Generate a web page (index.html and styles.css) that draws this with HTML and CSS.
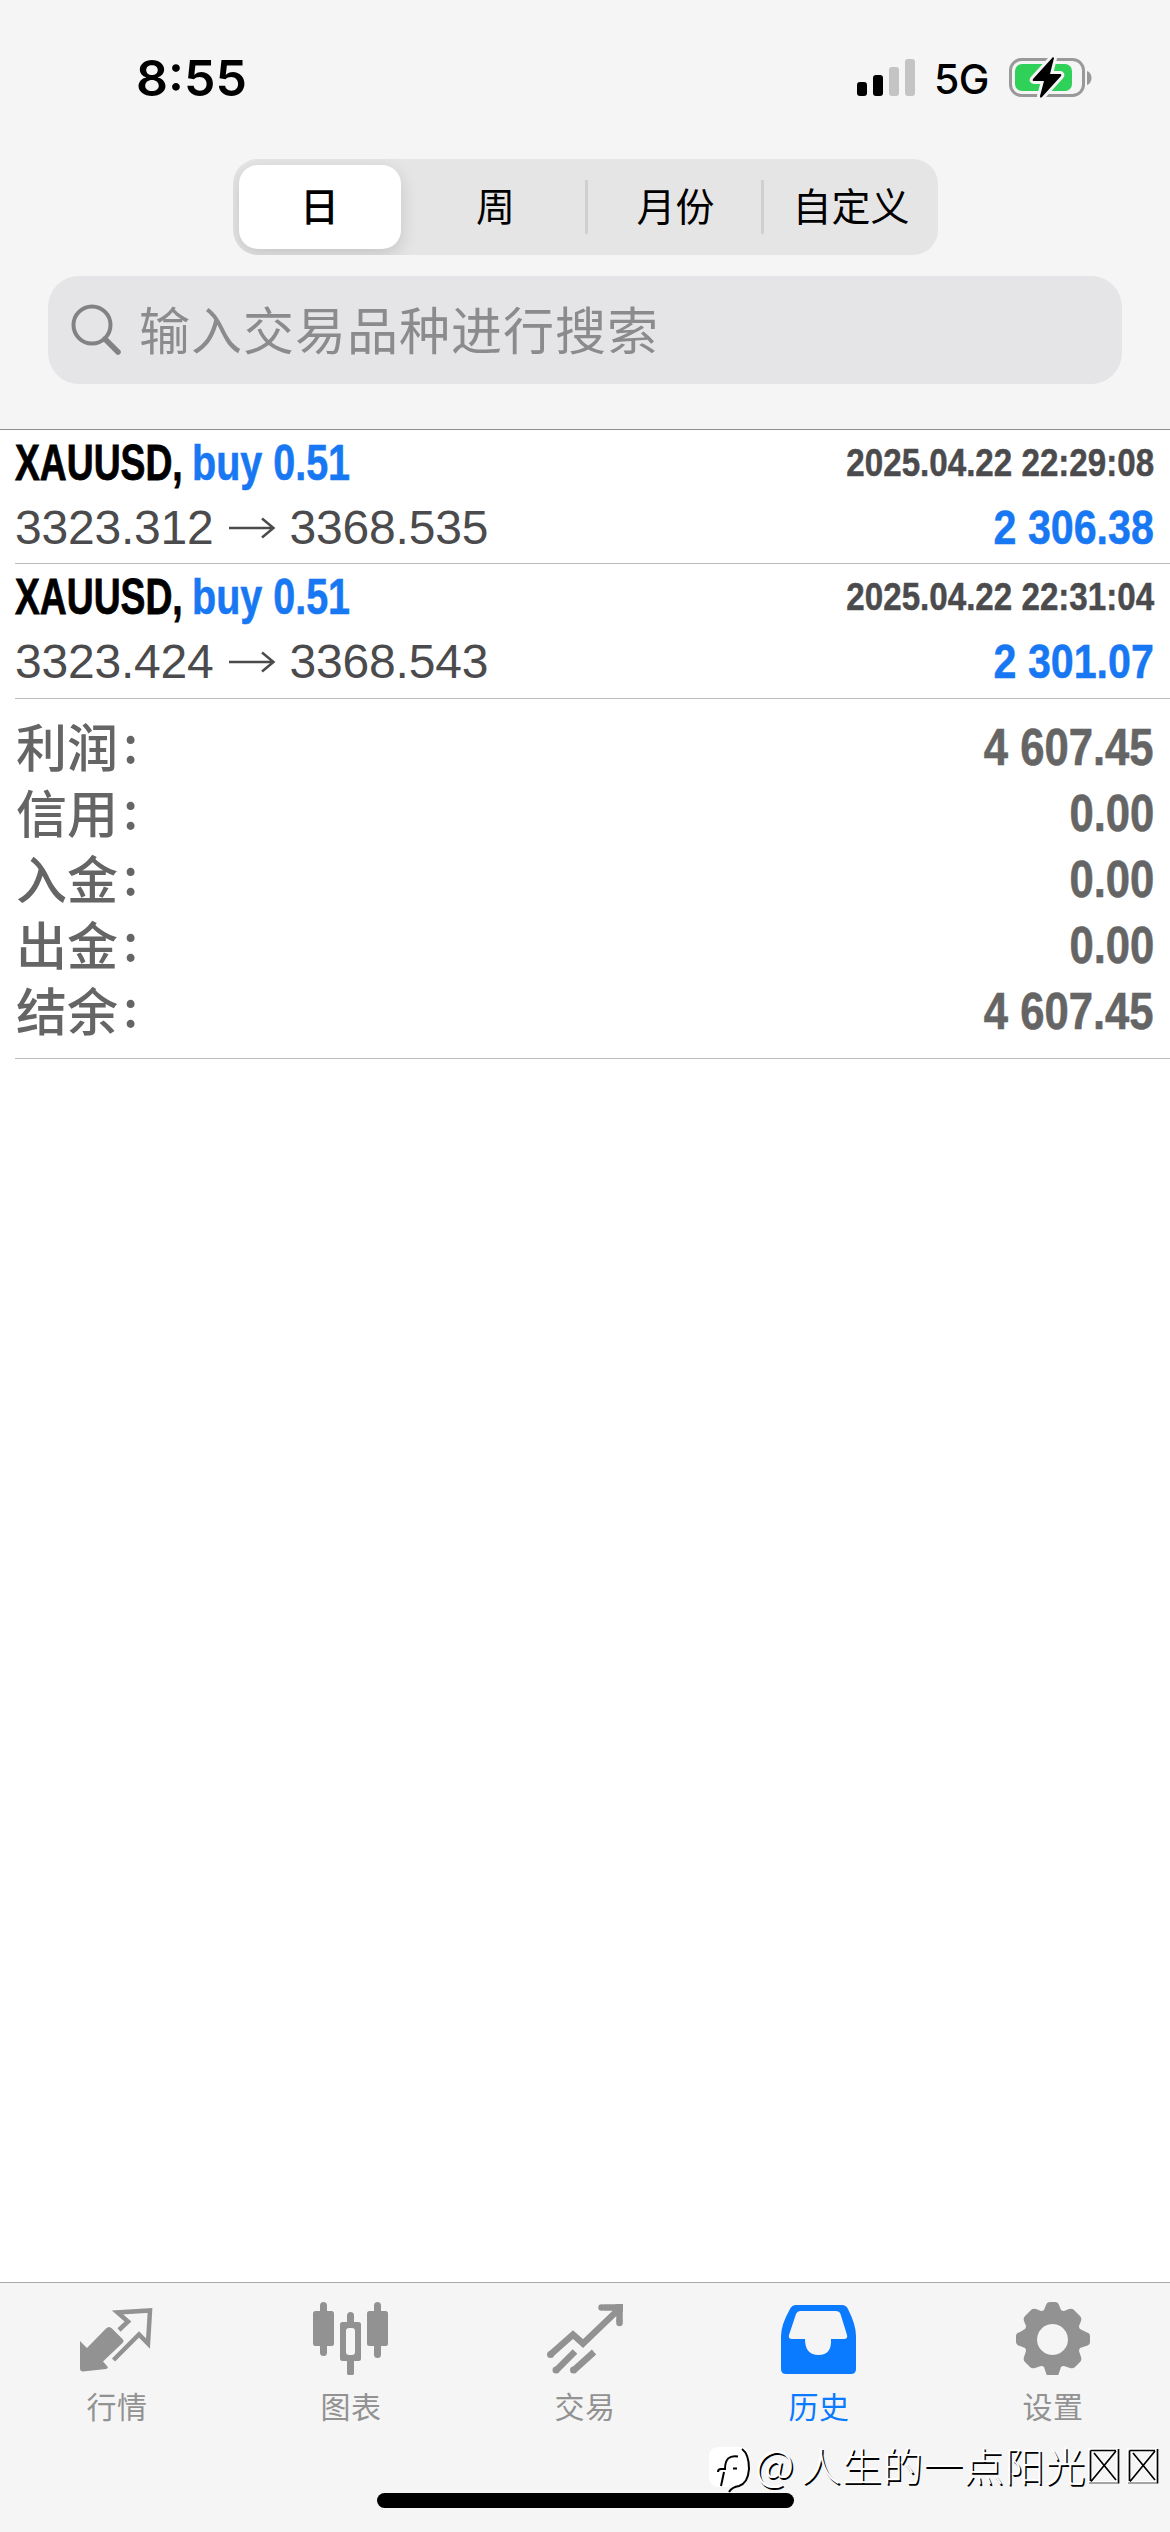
FILE: index.html
```html
<!DOCTYPE html>
<html lang="zh-CN">
<head>
<meta charset="utf-8">
<title>历史</title>
<link rel="stylesheet" href="styles.css">
</head>
<body>
<div class="app">
  <header class="top">
    <div class="status">
      <span class="clock">8:55</span>
      <div class="status-right">
        <svg class="signal" width="59" height="42" viewBox="0 0 59 42"><rect x="0" y="23" width="10" height="14" rx="3"/><rect x="16" y="16" width="10" height="21" rx="3"/><rect x="32" y="8" width="10" height="29" rx="3" fill="#c4c4c4"/><rect x="48" y="0" width="10" height="37" rx="3" fill="#c4c4c4"/></svg>
        <span class="net">5G</span>
        <svg class="battery" width="84" height="42" viewBox="0 0 84 42"><rect x="1.5" y="2.5" width="73" height="36" rx="11" fill="none" stroke="#999" stroke-width="3"/><rect x="6" y="7" width="57" height="27" rx="7" fill="#30d158"/><path d="M78 14c6 2 6 12 0 14z" fill="#999"/><path d="M44 0 24 22q-1 2 1 2h10l-4 15q0 3 2 1L52 19q1-2-1-2H41l4-16z" stroke="#f5f5f5" stroke-width="6" stroke-linejoin="round"/><path d="M44 0 24 22q-1 2 1 2h10l-4 15q0 3 2 1L52 19q1-2-1-2H41l4-16z"/></svg>
      </div>
    </div>
    <nav class="segments">
      <span class="seg on">日</span>
      <span class="seg week">周</span>
      <span class="seg line">月份</span>
      <span class="seg line custom">自定义</span>
    </nav>
    <div class="search">
      <svg class="lens" width="52" height="52" viewBox="0 0 52 52"><circle cx="21" cy="21" r="18.500" stroke-width="4"/><path d="M34 35 47 48" stroke-width="5.500"/></svg>
      <span>输入交易品种进行搜索</span>
    </div>
  </header>
  <main class="content">
    <section class="deal">
      <div class="deal-line head"><b class="cond sym">XAUUSD,</b><b class="cond side">buy 0.51</b><b class="cond date">2025.04.22 22:29:08</b></div>
      <div class="deal-line"><span class="price">3323.312</span><svg class="arrow" width="48" height="22" viewBox="0 0 48 22"><path d="M1 11H45M34 1.500 45.500 11 34 20.500"/></svg><span class="price">3368.535</span><b class="cond profit">2 306.38</b></div>
    </section>
    <section class="deal">
      <div class="deal-line head"><b class="cond sym">XAUUSD,</b><b class="cond side">buy 0.51</b><b class="cond date">2025.04.22 22:31:04</b></div>
      <div class="deal-line"><span class="price">3323.424</span><svg class="arrow" width="48" height="22" viewBox="0 0 48 22"><path d="M1 11H45M34 1.500 45.500 11 34 20.500"/></svg><span class="price">3368.543</span><b class="cond profit">2 301.07</b></div>
    </section>
    <section class="totals">
      <div class="total"><span class="label">利润</span><span class="colon">:</span><b class="cond sum">4 607.45</b></div>
      <div class="total"><span class="label">信用</span><span class="colon">:</span><b class="cond sum">0.00</b></div>
      <div class="total"><span class="label">入金</span><span class="colon">:</span><b class="cond sum">0.00</b></div>
      <div class="total"><span class="label">出金</span><span class="colon">:</span><b class="cond sum">0.00</b></div>
      <div class="total"><span class="label">结余</span><span class="colon">:</span><b class="cond sum">4 607.45</b></div>
    </section>
  </main>
  <footer class="tabs">
    <div class="tab">
      <svg width="80" height="80" viewBox="0 0 80 80"><path d="M3 46 10 53 29 33.500q3-3 6 0L45.500 44q2 2 0 4L26 66.500 30 71q2 2-1 3L6 76.500q-3 0-3-3V47z"/><path d="M42 35 51 26.500 40.500 17.500 73 15.500 71 48.500 62 39.500 36.500 65" fill="none" stroke="currentColor" stroke-width="4.500"/></svg>
      <span>行情</span>
    </div>
    <div class="tab">
      <svg width="80" height="80" viewBox="0 0 80 80"><rect x="9" y="7" width="7" height="54" rx="3.500"/><rect x="2" y="16" width="21" height="35" rx="2.500"/><rect x="63" y="7" width="7" height="56" rx="3.500"/><rect x="56" y="16" width="21" height="35" rx="2.500"/><rect x="36" y="17" width="7" height="64" rx="3.500"/><rect x="29" y="27" width="21" height="39" rx="2.500"/><rect x="35" y="33" width="9" height="27" rx="3" fill="#f5f5f5"/></svg>
      <span>图表</span>
    </div>
    <div class="tab">
      <svg width="80" height="80" viewBox="0 0 80 80"><path d="M5 60 28 39.500 38 48.500 73 15M59 12.500H74.500V27M10.500 76 30 56.500M28 76 49 57" fill="none" stroke="currentColor" stroke-width="6.500"/><path d="M70 9h8v8z"/><circle cx="5.500" cy="59.500" r="3.500"/><circle cx="11" cy="75" r="3.500"/><circle cx="28.500" cy="75" r="3.500"/><path d="M56.500 12.500h1M74.500 27v1" stroke="currentColor" stroke-width="6.500" stroke-linecap="round"/></svg>
      <span>交易</span>
    </div>
    <div class="tab active">
      <svg width="80" height="80" viewBox="0 0 80 80"><path fill-rule="evenodd" d="M17 10H63q4 0 6 4 8 16 8 27V74q0 5-5 5H7q-5 0-5-5V41Q2 30 11 14q2-4 6-4zM21.500 16q-3 0-4.500 3L10 40q-1 4 3 4H26q0 16 13.500 16T52 44H65q4 0 3-4L61.500 19q-1-3-5-3z"/></svg>
      <span>历史</span>
    </div>
    <div class="tab">
      <svg width="80" height="80" viewBox="0 0 80 80"><path fill-rule="evenodd" d="M33 10q1-3 4-3h5q3 0 4 3l2 5q1 1 3 1l5-2q3-1 5 1l6 6q2 2 1 5l-2 5q0 2 1 3l6 3q4 1 4 4v6q0 3-4 4l-6 2q-1 2-1 3l2 6q1 3-1 5l-5 5q-2 2-5 1l-6-2q-2 0-3 1l-2 6q-1 4-4 4h-5q-3 0-4-4l-2-6q-1-1-3-1l-6 2q-3 1-5-1l-5-5q-2-2-1-5l2-6q0-2-1-3l-5-2q-4-1-4-4v-6q0-3 4-4l5-3q1-1 1-3l-2-5q-1-3 1-5l6-6q2-2 5-1l5 2q2 0 3-1zM39.500 29a15.500 15.500 0 1 0 .01 0z"/></svg>
      <span>设置</span>
    </div>
    <div class="home"></div>
    <div class="mark">
      <svg class="mark-logo" width="44" height="50" viewBox="0 0 44 50"><path d="M11 2H32q9 0 9 10V24Q41 36 33 40q-8 2-12 8l1-6H11Q1 42 1 30V12Q1 2 11 2z" fill="#fff"/><path d="M34 4Q41 9 41 24 40 38 31 41 24 42 21 47M30 11.500Q17 9 17 24M10 27q0-3 3-3h5M16 27 13 41M25 23.500h4" fill="none" stroke="#000" stroke-width="2"/></svg>
      <span class="at">@</span><span>人生的一点阳光</span>
      <svg class="tofu" width="76" height="40" viewBox="0 0 76 40"><g fill="none" stroke-width="2"><path stroke="#fff" d="M3 3H31V36H3zM3 3 31 36M31 3 3 36M42 3H70V36H42zM42 3 70 36M70 3 42 36"/><path stroke="#000" stroke-width="1.700" d="M32.500 3V37.500M4.500 4.500H30M4.500 4.500V35M30 5 5 35.500M8 7 30 34M71.500 3V37.500M43.500 4.500H69M43.500 4.500V35M69 5 44 35.500M47 7 69 34"/><path stroke="#888" stroke-width="1.500" d="M3 37H32M42 37H71"/></g></svg>
    </div>
  </footer>
</div>
</body>
</html>
```
FILE: styles.css
```css
* { box-sizing: border-box; }
body { margin: 0; background: #fff; font-family: "Liberation Sans", "Noto Sans CJK SC", sans-serif; }
.app { width: 1170px; height: 2532px; display: flex; flex-direction: column; overflow: hidden; }
svg { fill: currentColor; flex: none; }

.top { height: 430px; background: #f5f5f5; border-bottom: 1px solid #8e8e90; display: flex; flex-direction: column; align-items: center; }
.status { width: 100%; height: 159px; padding: 47px 77px 0 136px; display: flex; justify-content: space-between; align-items: flex-start; }
.clock { font: 600 50px/62px Inter, sans-serif; letter-spacing: 0; }
.status-right { display: flex; align-items: flex-start; padding-top: 11px; }
.net { font: 500 41px/42px Inter, sans-serif; margin: 0 20px 0 18px; letter-spacing: -.5px; }
.signal { margin-top: 1px; }
.battery { margin-top: -1px; }

.segments { width: 705px; height: 96px; border-radius: 25px; background: #e5e5e5; padding: 6px; display: grid; grid-template-columns: 162px 184px 176px 1fr; overflow: hidden; }
.seg { display: flex; align-items: center; justify-content: center; font: 400 39px/78px "Noto Sans CJK SC", sans-serif; padding-bottom: 6px; }
.seg.on { background: #fff; border-radius: 19px; font-weight: 500; box-shadow: 0 6px 18px rgba(0,0,0,.14); }
.seg.week { padding-left: 6px; }
.seg.line { border-left: 3px solid #d0d0d1; height: 54px; align-self: center; padding-left: 3px; }
.seg.custom { padding-left: 7px; }

.search { width: 1074px; height: 108px; margin-top: 21px; border-radius: 31px; background: #e5e5e7; padding: 0 23px; display: flex; align-items: center; gap: 16px; color: #8b8b8e; font: 400 51px/104px "Noto Sans CJK SC", sans-serif; letter-spacing: 1px; }
.search span { padding-bottom: 4px; }
.lens { fill: none; stroke: #828284; stroke-linecap: round; }

.content { flex: 1; padding-left: 15px; }
.deal { height: 135px; padding: 3px 16px 0 0; border-bottom: 1px solid #bcbcbe; }
.deal:first-child { height: 134px; }
.deal-line { height: 63px; display: flex; align-items: center; color: #4b4b4d; white-space: nowrap; }
.deal-line.head { padding-bottom: 4px; }
.cond { display: block; font-weight: 700; transform-origin: 0 50%; }
.sym { color: #000; font-size: 50px; width: 177px; transform: scaleX(.745); -webkit-text-stroke: .8px #000; }
.side { color: #1877f2; font-size: 50px; transform: scaleX(.79); -webkit-text-stroke: .6px #1877f2; }
.date { font-size: 39px; transform-origin: 100% 50%; transform: scaleX(.85); margin-left: auto; -webkit-text-stroke: .5px #4b4b4d; }
.price { font-size: 48px; letter-spacing: -.2px; }
.arrow { margin: 0 14px 0 14px; fill: none; stroke: #4b4b4d; stroke-width: 2.5px; }
.profit { color: #1877f2; font-size: 48px; margin-left: auto; transform-origin: 100% 50%; transform: scaleX(.858); -webkit-text-stroke: .5px #1877f2; }

.totals { padding: 15px 16px 0 1px; height: 360px; border-bottom: 1px solid #bcbcbe; color: #656565; }
.total { height: 66px; display: flex; align-items: center; }
.label { font: 500 51px/60px "Noto Sans CJK SC", sans-serif; padding-bottom: 5px; }
.colon { font: 500 51px/50px "Noto Sans CJK SC", sans-serif; padding-bottom: 12px; margin-left: 5px; }
.sum { font-size: 51px; margin-left: auto; transform-origin: 100% 50%; transform: scaleX(.855); -webkit-text-stroke: .6px #656565; }

.tabs { height: 250px; background: #f5f5f5; border-top: 1px solid #a9a9a9; display: grid; grid-template-columns: repeat(5, 1fr); position: relative; }
.tab { color: #929292; display: flex; flex-direction: column; align-items: center; padding-top: 12px; font: 400 30px/40px "Noto Sans CJK SC", sans-serif; letter-spacing: .5px; }
.tab span { margin-top: 10px; }
.tab.active { color: #0a7aff; }
.home { position: absolute; left: 377px; top: 210px; width: 417px; height: 15px; border-radius: 8px; background: #000; }
.mark { position: absolute; left: 708px; top: 162px; display: flex; align-items: flex-start; font: 300 40px/46px "Noto Sans CJK SC", sans-serif; letter-spacing: .7px; color: #fff; text-shadow: 1.5px 1.5px 0 #000; white-space: nowrap; }
.mark span { margin-top: -4px; }
.mark .at { font-size: 43px; width: 46px; margin-left: 3px; margin-top: -6px; letter-spacing: 0; }
.tofu { margin-top: 1px; }
```
